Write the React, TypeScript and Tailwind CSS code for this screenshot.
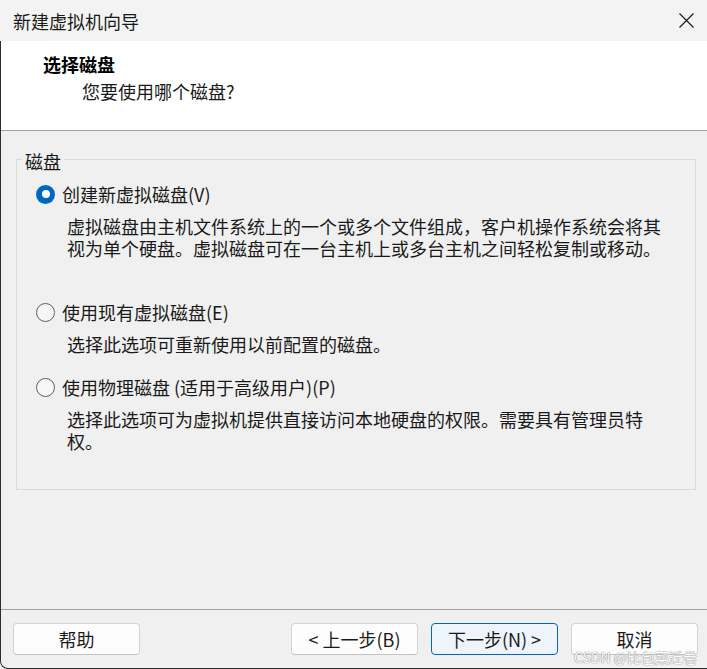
import React from "react";

const ui = "font-['Noto_Sans_CJK_SC','Noto_Sans',sans-serif]";

function Radio({ checked }: { checked?: boolean }) {
  if (checked) {
    return (
      <span className="w-[19px] h-[19px] rounded-full bg-[#0067c0] flex items-center justify-center shrink-0">
        <span className="w-[8px] h-[8px] rounded-full bg-white" />
      </span>
    );
  }
  return <span className="w-[19px] h-[19px] rounded-full border border-[#5f5f5f] bg-[#f6f6f6] shrink-0" />;
}

function Option({ checked, label, desc }: { checked?: boolean; label: string; desc: string }) {
  return (
    <div>
      <div className="flex items-center gap-[7px] h-[22px]">
        <Radio checked={checked} />
        <span className="leading-[22px]">{label}</span>
      </div>
      <p className="mt-[10px] ml-[31px] w-[606px] leading-[22px]">{desc}</p>
    </div>
  );
}

function Btn({ children, primary }: { children: React.ReactNode; primary?: boolean }) {
  return (
    <button
      className={
        primary
          ? "w-[127px] h-[32px] rounded-[4px] border border-[#0067c0] bg-[#eef4fb] text-[18px] leading-none text-[#1a1a1a]"
          : "w-[127px] h-[32px] rounded-[4px] border border-[#d3d3d3] border-b-[#c4c4c4] bg-[#fdfdfd] text-[18px] leading-none text-[#1a1a1a]"
      }
    >
      {children}
    </button>
  );
}

export default function App() {
  return (
    <div className={`w-[707px] h-[669px] bg-[#f0f0f0] flex flex-col relative overflow-hidden text-[#1a1a1a] text-[18px] ${ui}`}>
      {/* title bar */}
      <div className="h-[41px] bg-[#f3f3f3] flex items-center justify-between shrink-0">
        <span className="pl-[13px] leading-[22px]">新建虚拟机向导</span>
        <svg width="15" height="15" viewBox="0 0 15 15" className="mr-[13px]">
          <path d="M0.5 0.5 L14.5 14.5 M14.5 0.5 L0.5 14.5" stroke="#1a1a1a" strokeWidth="1.2" fill="none" />
        </svg>
      </div>

      <div className="flex-1 flex flex-col border-l border-b border-[#2d2d2d] rounded-bl-[8px]">
        {/* header */}
        <div className="h-[90px] bg-white border-b border-[#a0a0a0] pl-[42px] pt-[12px] shrink-0">
          <div className="font-bold leading-[22px] text-black">选择磁盘</div>
          <div className="mt-[5px] pl-[39px] leading-[22px]">您要使用哪个磁盘?</div>
        </div>

        {/* body */}
        <div className="flex-1 pt-[28px] pl-[15px]">
          <div className="relative w-[680px] h-[331px] border border-[#dadada] pl-[19px] pt-[23px]">
            <span className="absolute top-[-10px] left-[5px] px-[3px] bg-[#f0f0f0] leading-[22px]">磁盘</span>
            <Option
              checked
              label="创建新虚拟磁盘(V)"
              desc="虚拟磁盘由主机文件系统上的一个或多个文件组成，客户机操作系统会将其视为单个硬盘。虚拟磁盘可在一台主机上或多台主机之间轻松复制或移动。"
            />
            <div className="mt-[42px]">
              <Option label="使用现有虚拟磁盘(E)" desc="选择此选项可重新使用以前配置的磁盘。" />
            </div>
            <div className="mt-[21px]">
              <Option
                label="使用物理磁盘 (适用于高级用户)(P)"
                desc="选择此选项可为虚拟机提供直接访问本地硬盘的权限。需要具有管理员特权。"
              />
            </div>
          </div>
        </div>

        {/* footer */}
        <div className="h-[59px] border-t border-[#a0a0a0] pt-[13px] pl-[12px] pr-[9px] flex justify-between shrink-0">
          <Btn>帮助</Btn>
          <div className="flex gap-[13px]">
            <Btn>&lt; 上一步(B)</Btn>
            <Btn primary>下一步(N) &gt;</Btn>
            <Btn>取消</Btn>
          </div>
        </div>
      </div>

      <span className="absolute right-[10px] bottom-[4px] text-[14px] leading-[16px] text-[#fafafa] [text-shadow:0_0_1px_#7a7a7a,0_0_1px_#9a9a9a]">
        CSDN @比包菜迁卷
      </span>
    </div>
  );
}
